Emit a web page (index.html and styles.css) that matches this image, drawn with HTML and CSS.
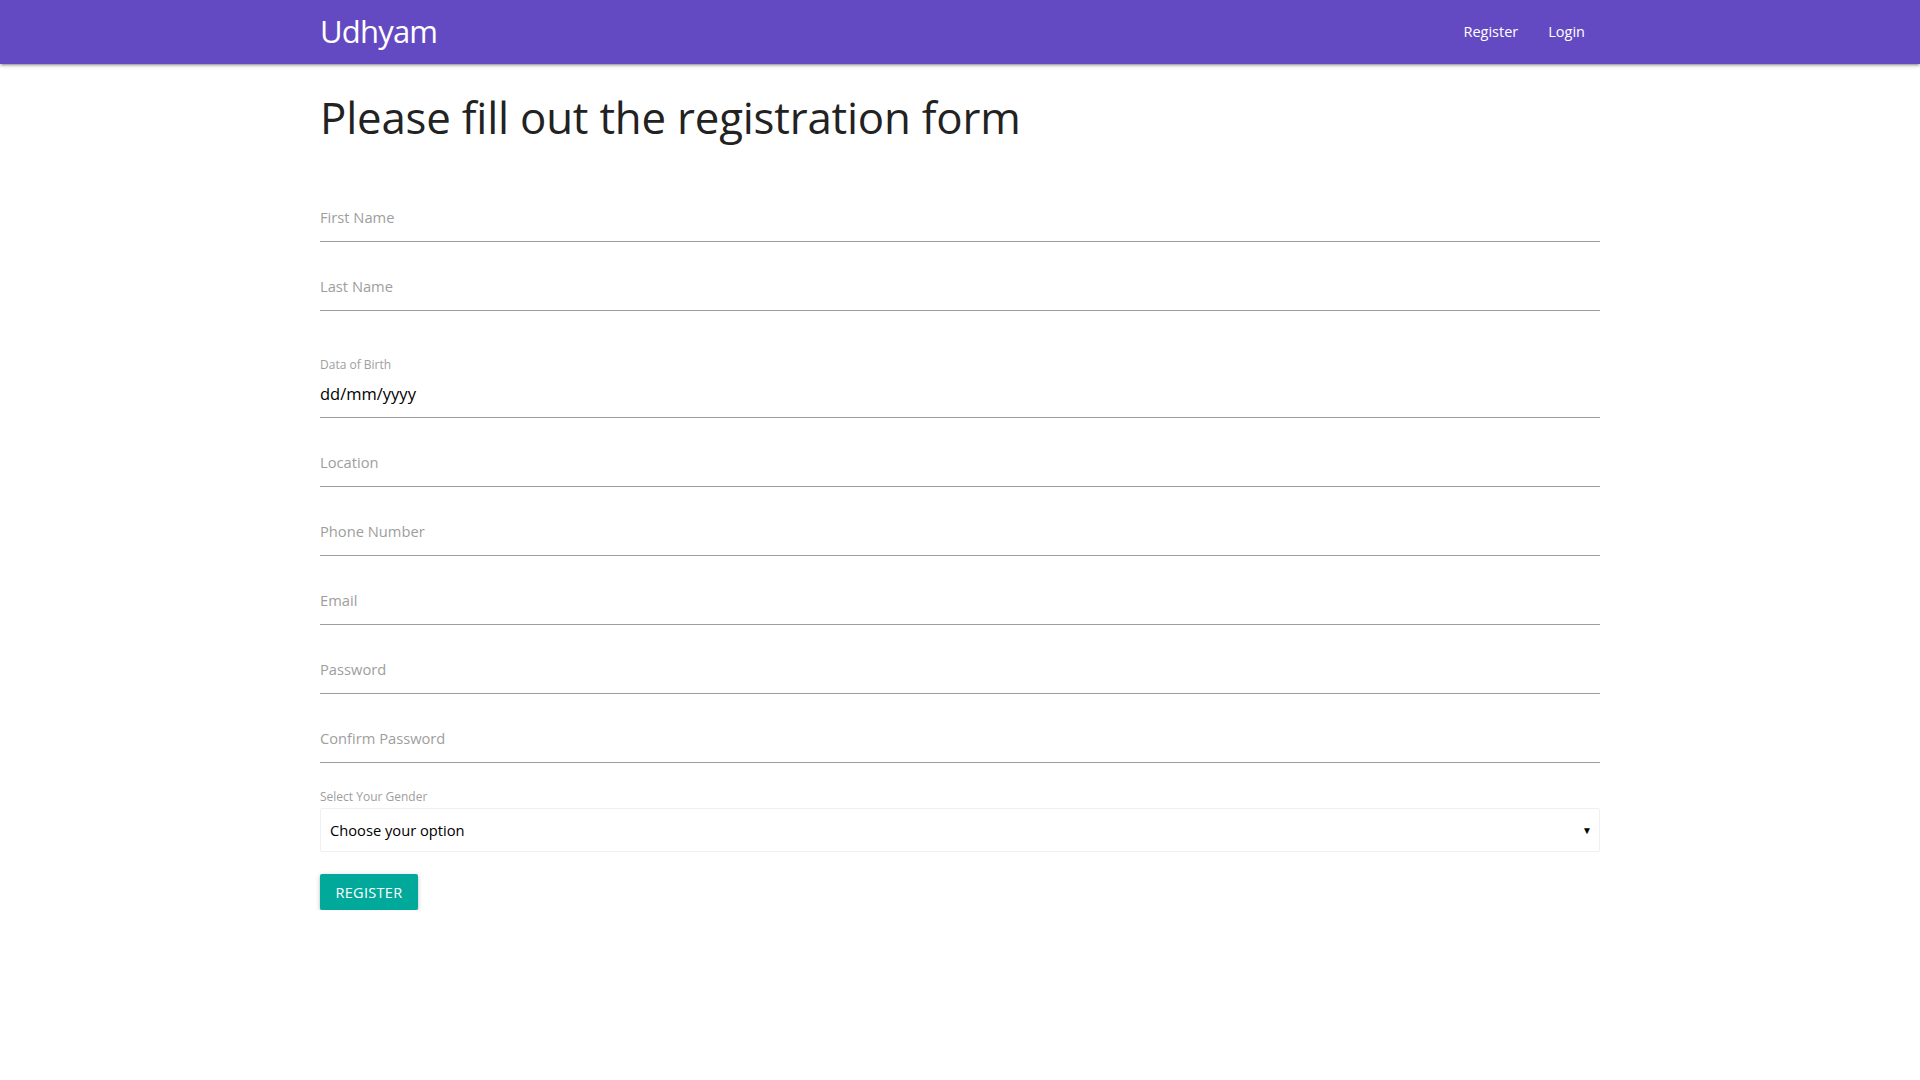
FILE: index.html
```html
<!DOCTYPE html>
<html lang="en">
<head>
<meta charset="utf-8">
<title>Udhyam - Register</title>
<link rel="stylesheet" href="styles.css">
</head>
<body>
<nav class="navbar">
  <div class="nav-wrapper">
    <a class="brand" href="#">Udhyam</a>
    <ul class="nav-links">
      <li><a href="#">Register</a></li>
      <li><a href="#">Login</a></li>
    </ul>
  </div>
</nav>
<main class="container">
  <h1 class="title">Please fill out the registration form</h1>
  <form class="form">
    <div class="field"><span class="placeholder">First Name</span></div>
    <div class="field"><span class="placeholder">Last Name</span></div>
    <div class="field-date">
      <span class="small-label">Data of Birth</span>
      <div class="field value"><span>dd/mm/yyyy</span></div>
    </div>
    <div class="field"><span class="placeholder">Location</span></div>
    <div class="field"><span class="placeholder">Phone Number</span></div>
    <div class="field"><span class="placeholder">Email</span></div>
    <div class="field"><span class="placeholder">Password</span></div>
    <div class="field"><span class="placeholder">Confirm Password</span></div>
    <div class="select-group">
      <span class="small-label">Select Your Gender</span>
      <div class="select"><span>Choose your option</span><span class="caret">&#9660;</span></div>
    </div>
    <button type="button" class="btn">Register</button>
  </form>
</main>
</body>
</html>
```
FILE: styles.css
```css
* { box-sizing: border-box; }
html, body { margin: 0; padding: 0; }
body {
  font-family: "Open Sans", "Noto Sans", sans-serif;
  color: rgba(0,0,0,0.87);
  background: #fff;
}
.navbar {
  height: 64px;
  background: #644ac2;
  box-shadow: 0 2px 2px 0 rgba(0,0,0,.14), 0 3px 1px -2px rgba(0,0,0,.12), 0 1px 5px 0 rgba(0,0,0,.2);
}
.nav-wrapper {
  width: 1280px;
  height: 64px;
  margin: 0 auto;
  display: flex;
  align-items: center;
  justify-content: space-between;
}
.brand {
  color: #fff;
  text-decoration: none;
  font-size: 31px;
  line-height: 62px;
  padding-bottom: 2px;
  letter-spacing: -0.8px;
}
.nav-links {
  list-style: none;
  margin: 0;
  padding: 0;
  display: flex;
}
.nav-links a {
  display: block;
  padding: 0 15px;
  color: #fff;
  text-decoration: none;
  font-size: 14.5px;
  line-height: 64px;
}
.container {
  width: 1280px;
  margin: 0 auto;
}
.title {
  font-size: 43.8px;
  font-weight: 400;
  line-height: 52px;
  margin: 27px 0 0;
  color: #222;
  letter-spacing: -0.2px;
}
.form {
  display: flex;
  flex-direction: column;
  padding-top: 50px;
}
.field {
  height: 49px;
  border-bottom: 1px solid #9e9e9e;
  display: flex;
  align-items: center;
  font-size: 14.7px;
  margin-bottom: 20px;
}
.placeholder { color: #9e9e9e; }
.field-date {
  display: flex;
  flex-direction: column;
  padding-top: 26px;
}
.small-label {
  font-size: 12px;
  line-height: 16px;
  color: #9e9e9e;
}
.field-date .small-label { margin-bottom: -4px; }
.value { font-size: 16.5px; color: #000; }
.select-group {
  display: flex;
  flex-direction: column;
  padding-top: 6px;
}
.select-group .small-label { margin-bottom: 3px; }
.select {
  height: 44px;
  border: 1px solid #f0f0f0;
  border-radius: 2px;
  display: flex;
  align-items: center;
  justify-content: space-between;
  padding: 0 7px 0 9px;
  font-size: 14.7px;
  color: #000;
}
.caret { font-size: 10px; color: #000; }
.btn {
  align-self: flex-start;
  margin-top: 22px;
  height: 36px;
  width: 98px;
  padding: 0;
  border: none;
  border-radius: 2px;
  background: #00a99a;
  color: #fff;
  font-family: inherit;
  font-size: 14.5px;
  text-transform: uppercase;
  letter-spacing: 0.3px;
  box-shadow: 0 2px 2px 0 rgba(0,0,0,.14), 0 3px 1px -2px rgba(0,0,0,.12), 0 1px 5px 0 rgba(0,0,0,.2);
}
```
